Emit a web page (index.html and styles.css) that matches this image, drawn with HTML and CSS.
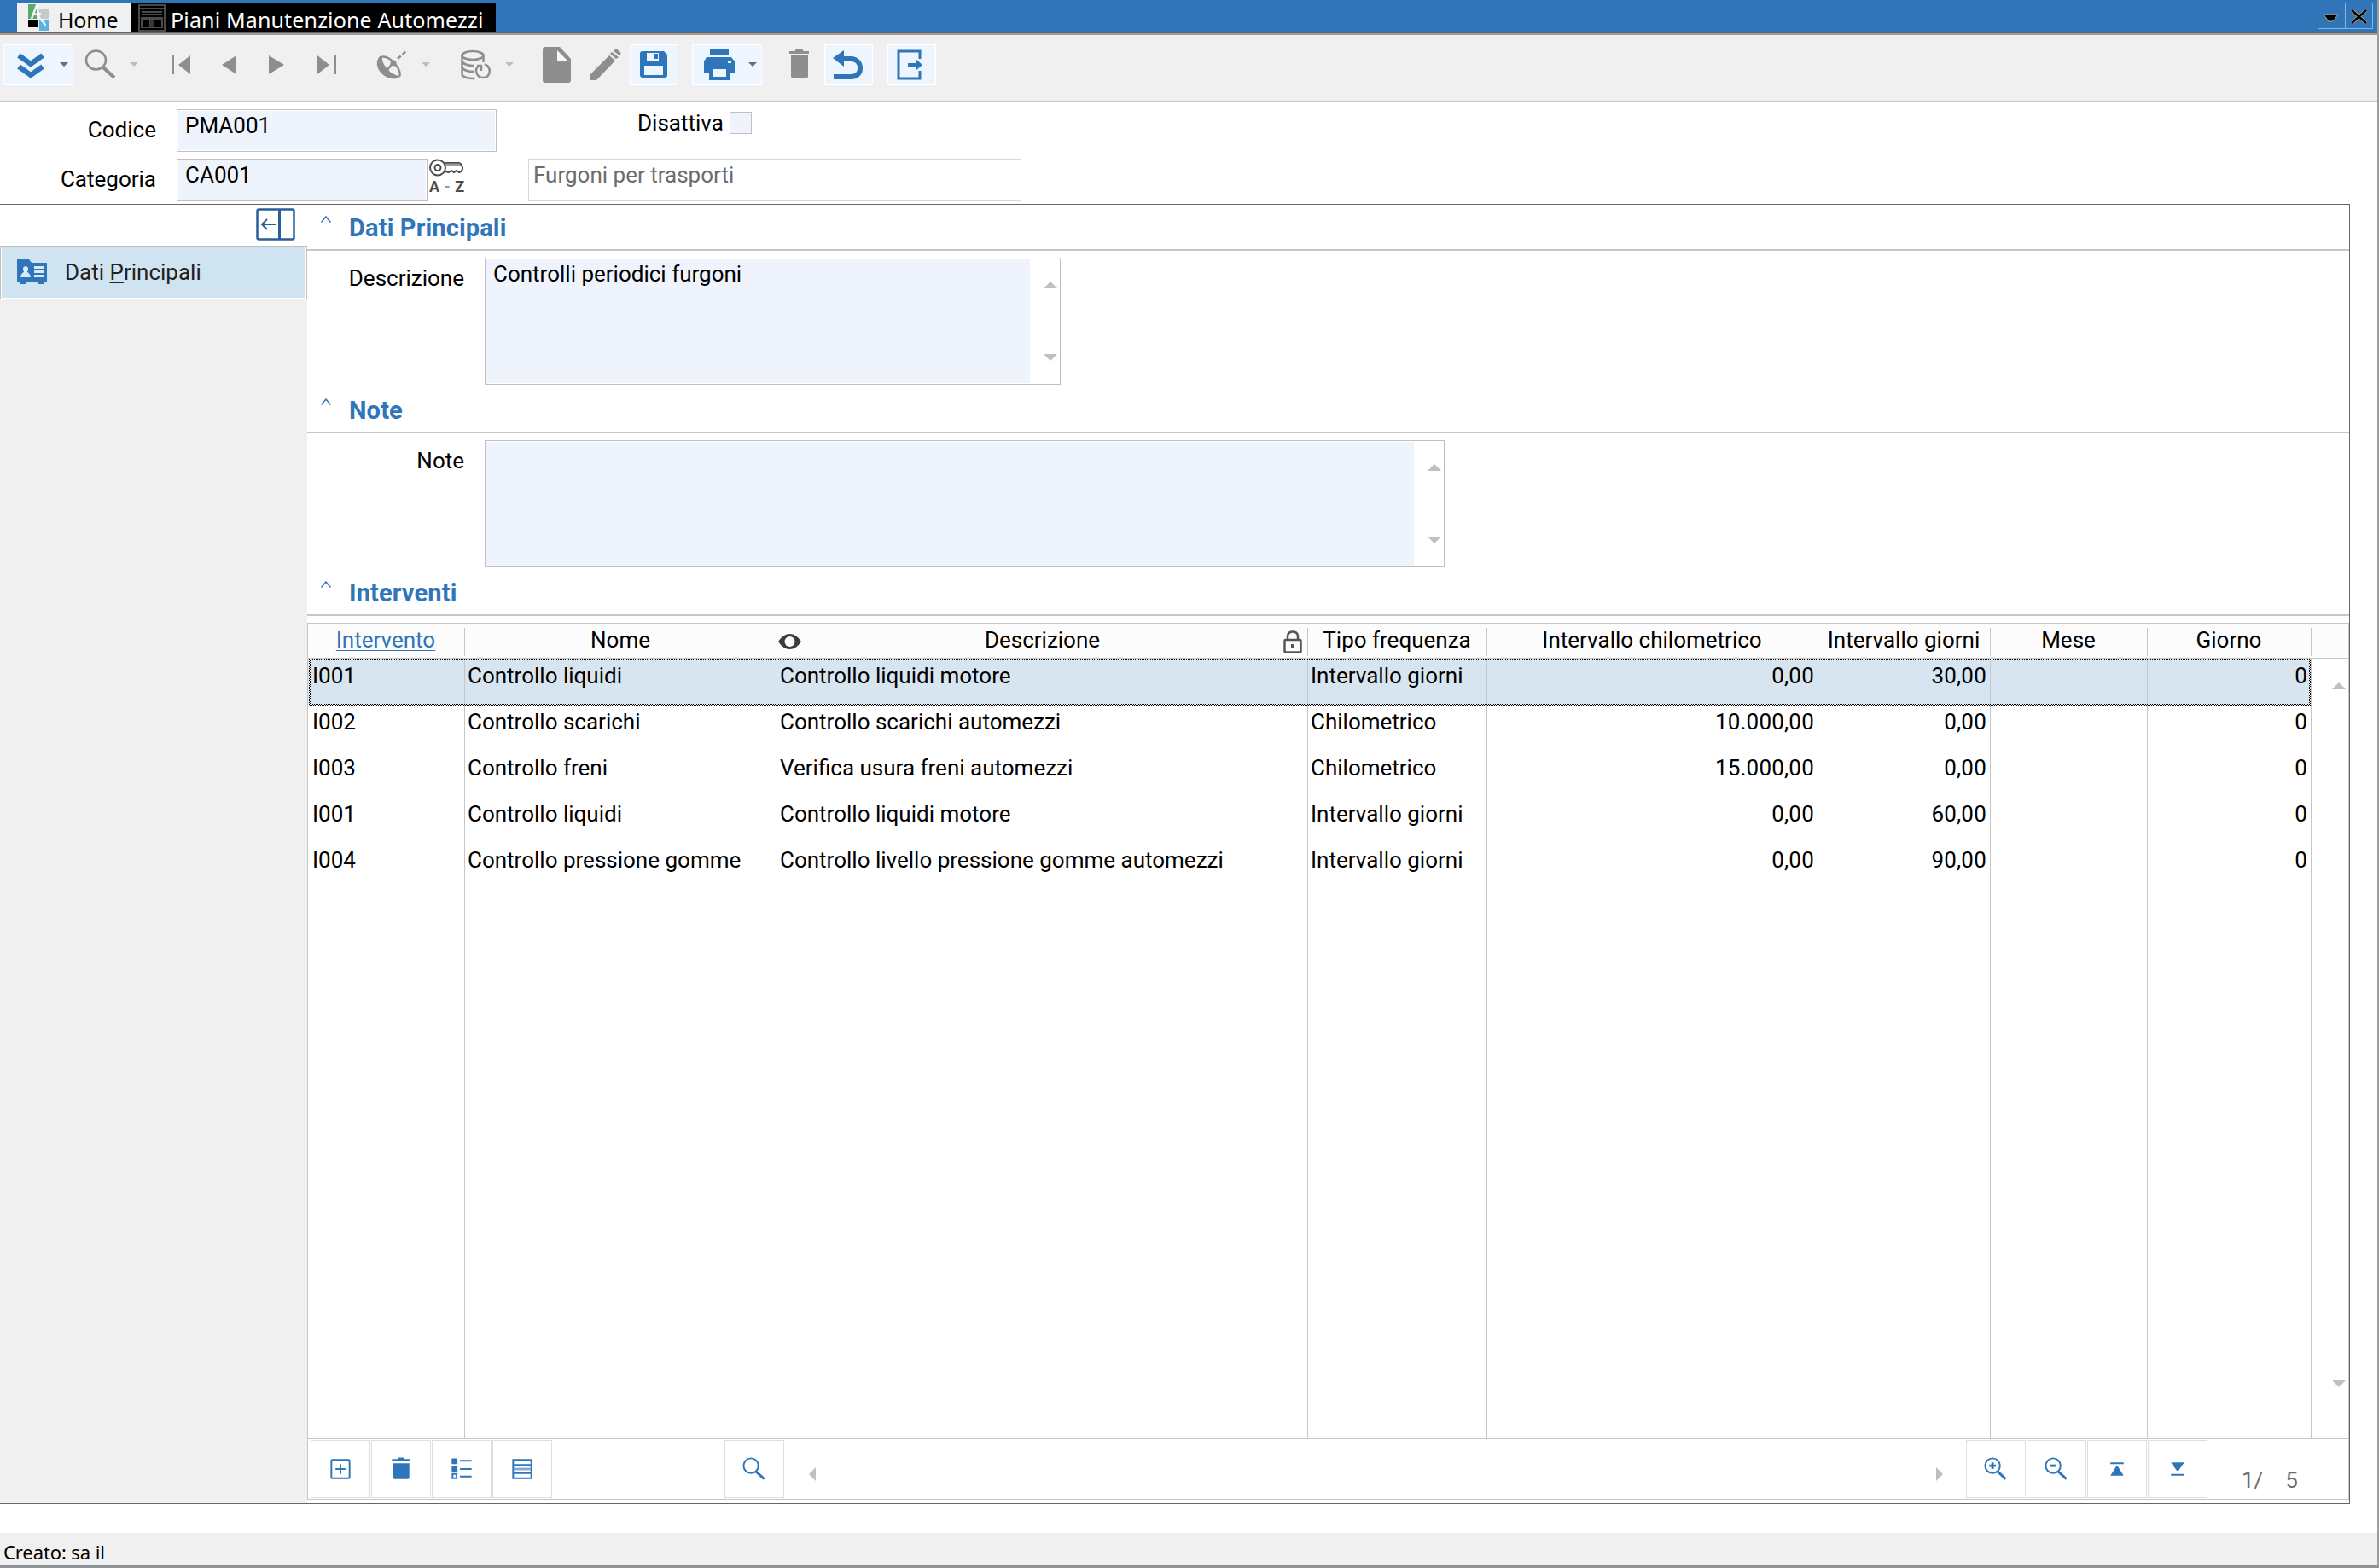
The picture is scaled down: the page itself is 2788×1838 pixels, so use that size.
FILE: index.html
```html
<!DOCTYPE html>
<html lang="it">
<head>
  <meta charset="UTF-8">
  <title>Piani Manutenzione Automezzi</title>
  <link rel="stylesheet" href="styles.css">
</head>
<body>
<div class="window">

  <div class="titlebar">
    <div class="tab tab-home">
      <svg width="24" height="32" viewBox="0 0 24 32">
        <path d="M0 0h10v17H0z" fill="#5aaa6c"/>
        <path d="M12 5h12v12H12z" fill="#c8cac9"/>
        <path d="M0 18h11v9H0z" fill="#000"/>
        <path d="M13 18h11v13H13z" fill="#55b4e3"/>
        <path d="M4 17L10 1l3 15c1 3 5 2 7 9M6 12l9-1" fill="none" stroke="#f4f4f4" stroke-width="2.4"/>
      </svg>
      <span>Home</span>
    </div>
    <div class="tab tab-active">
      <svg width="32" height="32" viewBox="0 0 32 32" fill="none" stroke="#4a4a4a" stroke-width="2">
        <path d="M1 1h30v30H1zM1 5h30M4 9h24M4 12h24"/>
        <path d="M3 15h26v13H3z" fill="#4a4a4a" stroke="none"/>
        <path d="M5 19h8v8H5zM19 19h8v8h-8z" fill="#000" stroke="none"/>
        <path d="M15 18v9M17 18v9" stroke="#222" stroke-width="1"/>
      </svg>
      <span>Piani Manutenzione Automezzi</span>
    </div>
    <div class="window-buttons">
      <div class="window-button"><svg width="30" height="29" viewBox="0 0 30 29"><path d="M6 14h17l-6 8h-5z" fill="#000" stroke="#b9a68c" stroke-width="1"/></svg></div>
      <div class="window-button"><svg width="30" height="29" viewBox="0 0 30 29" fill="none"><path d="M7 9l17 15M24 9L7 24" stroke="#b9a68c" stroke-width="4"/><path d="M7 9l17 15M24 9L7 24" stroke="#000" stroke-width="2.500"/></svg></div>
    </div>
  </div>

  <div class="toolbar">
    <div class="tool wide enabled"><svg viewBox="0 0 82 48"><path d="M18 13l14 10 14-10M18 26l14 10 14-10" fill="none" stroke="#2f75ba" stroke-width="6"/><path class="caret-on" d="M66 21h10l-5 5z"/></svg></div>
    <div class="tool wide"><svg viewBox="0 0 82 48"><ellipse cx="26.500" cy="18.500" rx="11.500" ry="11" class="line"/><path d="M35 27l13 12" stroke="#8e8e8e" stroke-width="4"/><path class="caret" d="M66 21h10l-5 5z"/></svg></div>
    <div class="gap"></div>
    <div class="tool"><svg viewBox="0 0 57 48"><path class="solid" d="M17 13h3v22h-3zM39 13v22L25 24z"/></svg></div>
    <div class="tool"><svg viewBox="0 0 57 48"><path class="solid" d="M36 13v22L19 24z"/></svg></div>
    <div class="tool"><svg viewBox="0 0 57 48"><path class="solid" d="M17 13v22l18-11z"/></svg></div>
    <div class="tool"><svg viewBox="0 0 57 48"><path class="solid" d="M17 13v22l14-11zM36 13h3v22h-3z"/></svg></div>
    <div class="gap"></div>
    <div class="tool wide"><svg viewBox="0 0 82 48"><path class="solid" d="M17 14c-5 5-4 14 2 20 6 6 15 8 21 5-1-3-7-3-12-8-5-5-9-11-8-17z"/><path class="line" d="M18 15c6-2 12 2 17 8 5 6 7 11 5 15M32 22l-6 8"/><circle class="solid" cx="33" cy="22" r="3.500"/><path class="line" stroke-dasharray="5 2.500" d="M38 17l11-10"/><path class="caret" d="M66 21h10l-5 5z"/></svg></div>
    <div class="gap"></div>
    <div class="tool wide"><svg viewBox="0 0 82 48"><ellipse class="line" cx="28" cy="13" rx="12.500" ry="5"/><path class="line" d="M15.500 13v22c0 3 6 5 15 5M40.500 13v8M16 21c3 3 8 4 13 4M16 28c3 3 8 4 13 4"/><path class="line" d="M35 25c-6 5-2 14 5 14 8 0 10-9 5-14l-3-2M33 25h5v6"/><path class="caret" d="M66 21h10l-5 5z"/></svg></div>
    <div class="gap"></div>
    <div class="tool"><svg viewBox="0 0 57 48"><path class="solid" d="M15 3h17l13 14v25q0 3-3 3H15q-3 0-3-3V6q0-3 3-3z"/><path d="M29 7v12h12z" fill="#f8f8f8"/></svg></div>
    <div class="tool"><svg viewBox="0 0 57 48"><path class="solid" d="M11 35l22-22 7 6-22 23h-7zM34 11l2-2 8 6-3 2zM38 8l2-2q2-1 5 2t0 5z"/></svg></div>
    <div class="tool enabled"><svg viewBox="0 0 57 48"><path d="M15 8h25l4 4v24q0 3-3 3H15q-3 0-3-3V11q0-3 3-3z" fill="#2f75ba"/><path d="M20 10h14v9H20zM17 25h22v11H17z" fill="#edf6fe"/><path d="M29 11h4v6h-4z" fill="#2f75ba"/></svg></div>
    <div class="gap"></div>
    <div class="tool wide enabled"><svg viewBox="0 0 82 48"><path d="M21 6h22v7H21zM17 15h29l4 5v13h-6v9H20v-9h-6V20z" fill="#2f75ba"/><path d="M24 29h16v9H24zM42 19h4v3h-4z" fill="#edf6fe"/><path class="caret-on" d="M66 21h10l-5 5z"/></svg></div>
    <div class="gap"></div>
    <div class="tool"><svg viewBox="0 0 57 48"><path class="solid" d="M16 8h6l2-2h7l2 2h6v3H16zM18 13h20v25q0 1-2 1H20q-2 0-2-1z"/></svg></div>
    <div class="tool enabled"><svg viewBox="0 0 57 48"><path d="M11 38h20c8 0 11-5 11-10s-3-11-11-11H20" fill="none" stroke="#2f75ba" stroke-width="6"/><path d="M23 7v19L10 16z" fill="#2f75ba"/></svg></div>
    <div class="gap wider"></div>
    <div class="tool enabled"><svg viewBox="0 0 57 48"><path d="M38 17V8H13v32h25v-9" fill="none" stroke="#2f75ba" stroke-width="3"/><path d="M24 22h9v-5l8 7-8 7v-5h-9z" fill="#2f75ba"/></svg></div>
  </div>

  <div class="content">
    <div class="key-form">
      <div class="form-row">
        <label>Codice</label>
        <div class="field codice">PMA001</div>
        <span class="check-label">Disattiva</span>
        <span class="checkbox"></span>
      </div>
      <div class="form-row">
        <label>Categoria</label>
        <div class="field categoria">CA001</div>
        <div class="lookup">
          <svg width="40" height="21" viewBox="0 0 40 21" fill="none" stroke="#4a4a4a" stroke-width="2">
            <circle cx="10" cy="10.500" r="9"/><circle cx="10" cy="10.500" r="3.500"/>
            <path d="M18 5h17q4 2 4 6t-4 5l-3-2-3 2-3-2-3 2-5-1"/><path d="M19 7h17" stroke="#999" stroke-width="3"/>
          </svg>
          <span>A <i>-</i> Z</span>
        </div>
        <div class="field readonly">Furgoni per trasporti</div>
      </div>
    </div>

    <div class="workspace">
      <div class="sidebar">
        <div class="sidebar-top">
          <svg width="46" height="38" viewBox="0 0 46 38" fill="none" stroke="#2a5f98" stroke-width="2.500">
            <rect x="1.500" y="1.500" width="43" height="35" rx="2"/><path d="M27.500 1v36" stroke-width="3"/><path d="M23 19H8M13 13l-6 6 6 6" stroke-width="2"/>
          </svg>
        </div>
        <div class="sidebar-item">
          <svg width="36" height="32" viewBox="0 0 36 32">
            <path d="M0 2h14l3 4h18v22h-4v3h-7v-3H11v3H4v-3H0z" fill="#2f75ba"/>
            <path d="M4 23q1-5 4-6-3-6 2-7 5 1 2 7 3 1 4 6zM20 10h12v3H20zM20 15h12v3H20zM20 20h12v3H20z" fill="#d8eaf8"/>
          </svg>
          <span>Dati <u>P</u>rincipali</span>
        </div>
      </div>

      <div class="main">
        <div class="section-title"><svg width="12" height="8" viewBox="0 0 12 8"><path d="M.5 7.500L6 1l5.500 6.500"/></svg>Dati Principali</div>
        <div class="section-body">
          <label>Descrizione</label>
          <div class="textarea descrizione">
            <div class="text">Controlli periodici furgoni</div>
            <div class="scroll"><i class="up"></i><i class="down"></i></div>
          </div>
        </div>

        <div class="section-title"><svg width="12" height="8" viewBox="0 0 12 8"><path d="M.5 7.500L6 1l5.500 6.500"/></svg>Note</div>
        <div class="section-body">
          <label>Note</label>
          <div class="textarea note">
            <div class="text"></div>
            <div class="scroll"><i class="up"></i><i class="down"></i></div>
          </div>
        </div>

        <div class="section-title"><svg width="12" height="8" viewBox="0 0 12 8"><path d="M.5 7.500L6 1l5.500 6.500"/></svg>Interventi</div>

        <div class="grid">
          <div class="grid-head">
            <div class="sorted"><span>Intervento</span></div>
            <div>Nome</div>
            <div class="with-icons">
              <svg width="27" height="18" viewBox="0 0 27 18"><path d="M0 9Q6 0 13.500 0T27 9Q21 18 13.500 18T0 9z" fill="#3c3c3c"/><circle cx="13.500" cy="9" r="6" fill="#fcfcfc"/></svg>
              Descrizione
              <svg width="22" height="27" viewBox="0 0 22 27" fill="none" stroke="#555" stroke-width="2.500"><path d="M5 11V6q1-4.500 6-4.500T17 6v5"/><rect x="1.500" y="11" width="19" height="14.500" rx="1"/><path d="M9 18h4" stroke-width="4"/></svg>
            </div>
            <div>Tipo frequenza</div>
            <div>Intervallo chilometrico</div>
            <div>Intervallo giorni</div>
            <div>Mese</div>
            <div>Giorno</div>
          </div>
          <div class="grid-body">
            <div class="rows">
              <div class="row selected"><div>I001</div><div>Controllo liquidi</div><div>Controllo liquidi motore</div><div>Intervallo giorni</div><div class="num">0,00</div><div class="num">30,00</div><div></div><div class="num">0</div></div>
              <div class="row"><div>I002</div><div>Controllo scarichi</div><div>Controllo scarichi automezzi</div><div>Chilometrico</div><div class="num">10.000,00</div><div class="num">0,00</div><div></div><div class="num">0</div></div>
              <div class="row"><div>I003</div><div>Controllo freni</div><div>Verifica usura freni automezzi</div><div>Chilometrico</div><div class="num">15.000,00</div><div class="num">0,00</div><div></div><div class="num">0</div></div>
              <div class="row"><div>I001</div><div>Controllo liquidi</div><div>Controllo liquidi motore</div><div>Intervallo giorni</div><div class="num">0,00</div><div class="num">60,00</div><div></div><div class="num">0</div></div>
              <div class="row"><div>I004</div><div>Controllo pressione gomme</div><div>Controllo livello pressione gomme automezzi</div><div>Intervallo giorni</div><div class="num">0,00</div><div class="num">90,00</div><div></div><div class="num">0</div></div>
              <div class="row filler"><div></div><div></div><div></div><div></div><div></div><div></div><div></div><div></div></div>
            </div>
            <div class="scroll"><i class="up"></i><i class="down"></i></div>
          </div>
          <div class="grid-foot">
            <div class="foot-button"><svg viewBox="0 0 70 68"><rect x="24" y="23" width="22" height="22" rx="1"/><path d="M35 28v12M29 34h12"/></svg></div>
            <div class="foot-button"><svg viewBox="0 0 70 68"><path class="fill" d="M24 22h7l1-2h6l1 2h7v2H24zM25 27h20v17q0 2-2 2H27q-2 0-2-2z"/></svg></div>
            <div class="foot-button"><svg viewBox="0 0 70 68"><path class="fill" d="M23 21h7v7h-7zM23 30h7v7h-7z"/><path d="M24 40h5v5h-5zM33 24h14M33 34h14M33 43h14"/></svg></div>
            <div class="foot-button"><svg viewBox="0 0 70 68"><path d="M24 23h22v22H24zM24 29h22M24 39h22"/><path d="M25 34h20" stroke-width="3" opacity=".6"/></svg></div>
            <div class="foot-button search"><svg viewBox="0 0 70 68"><ellipse cx="31" cy="30" rx="9" ry="9"/><path d="M37 37l10 9" stroke-width="3"/></svg></div>
            <i class="left"></i>
            <i class="right"></i>
            <div class="foot-button"><svg viewBox="0 0 70 68"><ellipse cx="31" cy="30" rx="9" ry="9"/><path d="M37 37l10 9" stroke-width="3"/><path d="M31 26v8M27 30h8" stroke-width="3"/></svg></div>
            <div class="foot-button"><svg viewBox="0 0 70 68"><ellipse cx="31" cy="30" rx="9" ry="9"/><path d="M37 37l10 9" stroke-width="3"/><path d="M27 30h8" stroke-width="3"/></svg></div>
            <div class="foot-button"><svg viewBox="0 0 70 68"><path class="fill" d="M27 26h16v2H27zM34 31h2l7 11H27z"/></svg></div>
            <div class="foot-button"><svg viewBox="0 0 70 68"><path class="fill" d="M27 26h16l-7 10h-2zM27 40h16v2H27z"/></svg></div>
            <div class="counter"><span>1/</span><span>5</span></div>
          </div>
        </div>
      </div>
    </div>
  </div>

  <div class="statusbar">Creato: sa il</div>
</div>
</body>
</html>
```

FILE: styles.css
```css
* {
  box-sizing: border-box;
}

body {
  margin: 0;
  font-family: Roboto, "Liberation Sans", sans-serif;
  font-size: 26px;
  color: #000;
  background-color: #fff;
}

svg {
  display: block;
  flex: none;
}

.window {
  display: flex;
  flex-direction: column;
  width: 2788px;
  height: 1838px;
  border-right: 2px solid #9d9d9d;
  border-bottom: 3px solid #8d9499;
}

/* title bar */
.titlebar {
  display: flex;
  height: 39px;
  padding: 3px 5px 0 20px;
  background-color: #3175b9;
  border-bottom: 1px solid #666;
  font-family: "Noto Sans", "Open Sans", sans-serif;
  font-size: 25px;
  line-height: 40px;
}

.tab {
  display: flex;
  height: 35px;
  white-space: nowrap;
}

.tab span {
  height: 35px;
  margin-top: -2px;
}

.tab-home {
  width: 133px;
  padding: 2px 0 0 13px;
  gap: 11px;
  background-color: #f0f0f0;
  letter-spacing: -0.2px;
}

.tab-active {
  width: 428px;
  padding: 2px 0 0 9px;
  gap: 6px;
  background-color: #000;
  color: #fff;
  letter-spacing: 0.15px;
}

.window-buttons {
  display: flex;
  margin-left: auto;
}

.window-button {
  width: 32px;
  height: 31px;
  border-right: 1px solid #86b4de;
  border-bottom: 1px solid #86b4de;
}

/* toolbar */
.toolbar {
  display: flex;
  height: 81px;
  padding: 11px 0 0 4px;
  border-top: 2px solid #a09c9c;
  border-bottom: 2px solid #c6c6c6;
  background-color: #f0f0f0;
}

.tool {
  width: 57px;
  height: 48px;
  flex: none;
}

.tool.wide {
  width: 82px;
}

.tool svg {
  width: 100%;
  height: 48px;
}

.tool.enabled {
  background-color: #edf6fe;
  box-shadow: inset 0 0 0 1px #fff;
}

.gap {
  width: 16px;
  flex: none;
}

.gap.wider {
  width: 17px;
}

.line {
  fill: none;
  stroke: #8e8e8e;
  stroke-width: 2.5;
}

.solid {
  fill: #8e8e8e;
}

.caret {
  fill: #bdbdbd;
}

.caret-on {
  fill: #6d6d6d;
}

/* header form */
.content {
  width: 2754px;
  height: 1643px;
}

.key-form {
  height: 119px;
  padding-top: 8px;
}

.form-row {
  display: flex;
  height: 50px;
  margin-bottom: 8px;
}

.form-row label {
  width: 183px;
  margin-right: 24px;
  line-height: 48px;
  text-align: right;
}

.field {
  height: 50px;
  padding-left: 9px;
  border: 1px solid #c0c0c0;
  box-shadow: inset 0 0 0 1px #fff;
  background-color: #eff4fc;
  line-height: 37px;
}

.codice {
  width: 375px;
}

.categoria {
  width: 294px;
}

.check-label {
  margin-left: 165px;
  width: 108px;
  line-height: 32px;
}

.checkbox {
  width: 26px;
  height: 26px;
  margin-top: 3px;
  border: 1px solid #c0c0c0;
  background-color: #eff4fc;
}

.lookup {
  width: 118px;
  padding-left: 2px;
  font-size: 18px;
  font-weight: bold;
  line-height: 24px;
  color: #4a4a4a;
  word-spacing: 1px;
}

.lookup i {
  font-style: normal;
  color: #999;
}

.readonly {
  width: 578px;
  padding-left: 5px;
  border-color: #d8d8d8;
  background-color: #fff;
  color: #6d6d6d;
}

/* workspace */
.workspace {
  display: flex;
  height: 1524px;
  border: 1px solid #666;
  border-left: none;
}

.sidebar {
  width: 360px;
  flex: none;
  background-color: #f0f0f0;
}

.sidebar-top {
  height: 48px;
  padding: 4px 0 0 300px;
  background-color: #fff;
}

.sidebar-item {
  display: flex;
  height: 63px;
  padding: 13px 0 0 19px;
  gap: 20px;
  border: 1px solid #c0c0c0;
  box-shadow: inset 0 0 0 1px #fff;
  background-color: #d0e3f1;
  line-height: 34px;
  color: #222;
}

.sidebar-item u {
  text-decoration-thickness: 1px;
  text-underline-offset: 3px;
}

.main {
  width: 2393px;
}

.section-title {
  display: flex;
  height: 54px;
  padding-left: 16px;
  gap: 21px;
  border-bottom: 2px solid #c6c6c6;
  font-size: 29px;
  font-weight: bold;
  letter-spacing: 0.15px;
  line-height: 54px;
  color: #2f75ba;
}

.section-title svg {
  margin-top: 13px;
  fill: none;
  stroke: #2f75ba;
  stroke-width: 1.5;
}

.section-body {
  display: flex;
  height: 160px;
  padding-top: 8px;
}

.section-body label {
  width: 184px;
  margin-right: 24px;
  line-height: 48px;
  text-align: right;
}

.textarea {
  display: flex;
  height: 149px;
  padding: 1px;
  border: 1px solid #c0c0c0;
}

.textarea .text {
  flex: 1;
  padding-left: 8px;
  background-color: #eff4fc;
  line-height: 34px;
}

.textarea .scroll {
  width: 34px;
  padding: 26px 2px 26px 0;
}

.descrizione {
  width: 675px;
}

.note {
  width: 1125px;
}

.scroll {
  display: flex;
  flex-direction: column;
  align-items: flex-end;
  justify-content: space-between;
}

.up,
.down {
  border: 8px solid transparent;
}

.up {
  border-top: none;
  border-bottom-color: #bfbfbf;
}

.down {
  border-bottom: none;
  border-top-color: #bfbfbf;
}

/* interventi */
.grid {
  height: 1028px;
  margin-top: 8px;
  border: 1px solid #c6c6c6;
}

.grid-head,
.row {
  display: grid;
  grid-template-columns: 184px 366px 622px 210px 388px 202px 184px 192px;
}

.grid-head {
  height: 41px;
  padding: 5px 0 2px;
  border-bottom: 1px solid #c6c6c6;
  background-color: #fcfcfc;
  line-height: 29px;
  text-align: center;
}

.grid-head > div {
  padding-right: 1px;
  border-right: 1px solid #c6c6c6;
  white-space: nowrap;
}

.sorted span {
  color: #2f75ba;
  text-decoration: underline;
  text-decoration-thickness: 1px;
  text-underline-offset: 3px;
}

.grid-head .with-icons {
  display: flex;
  justify-content: space-between;
  padding: 0 6px 0 1px;
}

.with-icons svg {
  margin-top: 3px;
}

.with-icons svg:first-child {
  margin-top: 7px;
}

.grid-body {
  display: flex;
  height: 914px;
}

.grid-body .scroll {
  width: 43px;
  padding: 28px 3px 60px 0;
}

.rows {
  display: flex;
  flex-direction: column;
  width: 2348px;
}

.row {
  position: relative;
  height: 54px;
  line-height: 40px;
}

.row > div {
  padding: 0 4px 0 3px;
  border-right: 1px solid #c6c6c6;
  white-space: nowrap;
}

.row > div:first-child {
  padding-left: 5px;
}

.row .num {
  text-align: right;
  letter-spacing: 0.2px;
}

.selected {
  background-color: #d7e5f0;
}

/* dithered focus frame over the current row */
.selected::after {
  content: "";
  position: absolute;
  inset: 0 1px -1px 1px;
  padding: 2px;
  background: repeating-conic-gradient(#000 0 25%, #e6e6e6 0 50%) 0 0 / 2px 2px;
  mask: linear-gradient(#000 0 0) content-box exclude, linear-gradient(#000 0 0);
}

.filler {
  flex: 1;
}

.grid-foot {
  display: flex;
  height: 71px;
  padding: 1px 0 0 3px;
  gap: 1px;
  border-top: 1px solid #c6c6c6;
}

.foot-button {
  width: 70px;
  height: 68px;
  border: 1px solid #dedede;
}

.foot-button svg {
  width: 68px;
  height: 66px;
  fill: none;
  stroke: #2f75ba;
  stroke-width: 2;
}

.foot-button .fill {
  fill: #2f75ba;
  stroke: none;
}

.search {
  margin-left: 201px;
}

.left,
.right {
  height: 16px;
  margin-top: 32px;
  border: 8px solid transparent;
}

.left {
  margin-left: 28px;
  border-left: none;
  border-right-color: #bfbfbf;
}

.right {
  margin-left: auto;
  margin-right: 26px;
  border-right: none;
  border-left-color: #bfbfbf;
}

.counter {
  display: flex;
  width: 164px;
  padding-left: 39px;
  gap: 26px;
  line-height: 95px;
  color: #6d6d6d;
}

/* status bar */
.statusbar {
  height: 38px;
  margin-top: auto;
  padding-left: 4px;
  background-color: #f0f0f0;
  font-family: "Noto Sans", "Open Sans", sans-serif;
  font-size: 22px;
  letter-spacing: -0.1px;
  line-height: 44px;
}
```
